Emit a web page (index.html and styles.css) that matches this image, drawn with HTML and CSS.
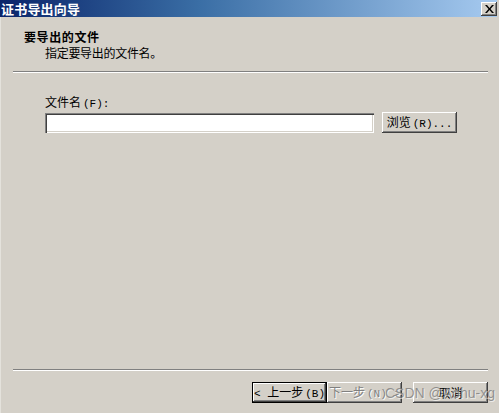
FILE: index.html
```html
<!DOCTYPE html>
<html lang="zh-CN">
<head>
<meta charset="utf-8">
<title>证书导出向导</title>
<link rel="stylesheet" href="styles.css">
</head>
<body>
<div class="window">
  <div class="titlebar">
    <span class="title">证书导出向导</span>
    <span class="close">
      <svg width="9" height="8" viewBox="0 0 9 8"><path d="M0 0h2l2.5 3 2.5-3h2l-3.5 4 3.5 4h-2l-2.5-3-2.5 3h-2l3.5-4z" fill="#000"/></svg>
    </span>
  </div>
  <div class="header">
    <div class="h-title">要导出的文件</div>
    <div class="h-sub">指定要导出的文件名。</div>
  </div>
  <div class="sep"></div>
  <div class="content">
    <div class="label">文件名<span class="a">(F):</span></div>
    <div class="row">
      <div class="input"></div>
      <div class="btn browse"><span>浏览<span class="a">(R)...</span></span></div>
    </div>
  </div>
  <div class="sep"></div>
  <div class="footer">
    <div class="pair">
      <div class="btn default"><span><span class="a0">&lt;&nbsp;</span>上一步<span class="a">(B)</span></span></div>
      <div class="btn disabled"><span>下一步<span class="a">(N)&nbsp;&gt;</span></span></div>
    </div>
    <div class="btn"><span>取消</span></div>
    <span class="watermark">CSDN @Aohu-xg</span>
  </div>
</div>
</body>
</html>
```
FILE: styles.css
```css
* { box-sizing: border-box; }
html, body { margin: 0; padding: 0; }
body {
  width: 499px;
  height: 413px;
  overflow: hidden;
  font-family: "Noto Sans CJK SC", "DejaVu Sans", sans-serif;
  font-size: 12px;
  color: #000;
  background: #d4d0c8;
}
.window {
  width: 499px;
  height: 413px;
  display: flex;
  flex-direction: column;
  background: #d4d0c8;
  border-left: 1px solid #e4e2dc;
  border-right: 2px solid #d4d0c8;
}
.titlebar {
  height: 17px;
  display: flex;
  align-items: center;
  justify-content: space-between;
  padding: 0 0 0 1px;
  background: linear-gradient(to right, #0a246a 0%, #3a6ea5 40%, #a6caf0 100%);
  margin-left: -1px;
}
.title {
  color: #fff;
  font-weight: bold;
  font-size: 13px;
  line-height: 17px;
  letter-spacing: 0.2px;
}
.close {
  width: 16px;
  height: 14px;
  background: #d4d0c8;
  display: flex;
  align-items: center;
  justify-content: center;
  box-shadow: inset -1px -1px #404040, inset 1px 1px #fff, inset -2px -2px #808080;
}
.header {
  padding: 12px 0 11px 23px;
}
.h-title {
  font-weight: bold;
  line-height: 15px;
  letter-spacing: 0.6px;
}
.h-sub {
  line-height: 15px;
  padding-left: 21px;
  margin-top: 1px;
  letter-spacing: -0.3px;
}
.sep {
  height: 2px;
  margin: 0 9px 0 12px;
  border-top: 1px solid #808080;
  border-bottom: 1px solid #fff;
}
.content {
  flex: 1;
  padding: 21px 0 0 44px;
}
.label {
  line-height: 15px;
}
.a, .a0 {
  font-family: "Liberation Mono", monospace;
  font-size: 11px;
}
.a { padding-left: 2px; }
.row {
  display: flex;
  align-items: center;
  gap: 8px;
}
.input {
  width: 329px;
  height: 20px;
  background: #fff;
  box-shadow: inset 1px 1px #808080, inset 2px 2px #404040, inset -1px -1px #fff, inset -2px -2px #d4d0c8;
}
.btn {
  width: 75px;
  height: 21px;
  display: flex;
  align-items: center;
  justify-content: center;
  background: #d4d0c8;
  line-height: 15px;
  white-space: nowrap;
  box-shadow: inset -1px -1px #404040, inset 1px 1px #fff, inset -2px -2px #808080, inset 2px 2px #d4d0c8;
}
.default {
  box-shadow: inset 0 0 0 1px #000, inset -2px -2px #404040, inset 2px 2px #fff, inset -3px -3px #808080;
}
.disabled {
  color: #808080;
  text-shadow: 1px 1px 0 #fff;
}
.footer {
  position: relative;
  display: flex;
  justify-content: flex-end;
  gap: 11px;
  padding: 11px 9px 10px 0;
}
.pair {
  display: flex;
}
.watermark {
  position: absolute;
  left: 384px;
  top: 14px;
  font-family: "Liberation Sans", sans-serif;
  font-size: 14px;
  color: rgba(120, 120, 120, 0.75);
  text-shadow: 1px 1px 0 rgba(255, 255, 255, 0.6);
  pointer-events: none;
}
```
